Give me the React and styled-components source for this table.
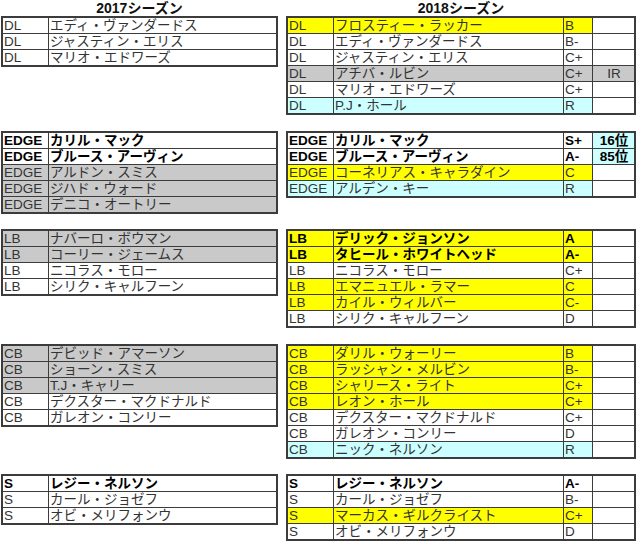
import React from 'react';
import styled, { createGlobalStyle } from 'styled-components';

const YELLOW = '#ffff00';
const GRAY = '#c9c9c9';
const CYAN = '#ccffff';

const GlobalStyle = createGlobalStyle`
	html, body {
		margin: 0;
		padding: 0;
		background: #ffffff;
	}
	body {
		font-family: "Liberation Sans", "Noto Sans CJK JP", sans-serif;
	}
`;

const LEFT_COLS = '45px 1fr';
const RIGHT_COLS = '45px 230px 29px 1fr';

const dl2017 = [
	{ pos: 'DL', name: 'エディ・ヴァンダードス' },
	{ pos: 'DL', name: 'ジャスティン・エリス' },
	{ pos: 'DL', name: 'マリオ・エドワーズ' },
];
const dl2018 = [
	{ pos: 'DL', name: 'フロスティー・ラッカー', grade: 'B', fill: YELLOW },
	{ pos: 'DL', name: 'エディ・ヴァンダードス', grade: 'B-' },
	{ pos: 'DL', name: 'ジャスティン・エリス', grade: 'C+' },
	{ pos: 'DL', name: 'アチバ・ルビン', grade: 'C+', note: 'IR', fill: GRAY, noteFill: GRAY },
	{ pos: 'DL', name: 'マリオ・エドワーズ', grade: 'C+' },
	{ pos: 'DL', name: 'P.J・ホール', grade: 'R', fill: CYAN },
];

const edge2017 = [
	{ pos: 'EDGE', name: 'カリル・マック', bold: true },
	{ pos: 'EDGE', name: 'ブルース・アーヴィン', bold: true },
	{ pos: 'EDGE', name: 'アルドン・スミス', fill: GRAY },
	{ pos: 'EDGE', name: 'ジハド・ウォード', fill: GRAY },
	{ pos: 'EDGE', name: 'デニコ・オートリー', fill: GRAY },
];
const edge2018 = [
	{ pos: 'EDGE', name: 'カリル・マック', grade: 'S+', note: '16位', noteFill: CYAN, bold: true },
	{ pos: 'EDGE', name: 'ブルース・アーヴィン', grade: 'A-', note: '85位', noteFill: CYAN, bold: true },
	{ pos: 'EDGE', name: 'コーネリアス・キャラダイン', grade: 'C', fill: YELLOW },
	{ pos: 'EDGE', name: 'アルデン・キー', grade: 'R', fill: CYAN },
];

const lb2017 = [
	{ pos: 'LB', name: 'ナバーロ・ボウマン', fill: GRAY },
	{ pos: 'LB', name: 'コーリー・ジェームス', fill: GRAY },
	{ pos: 'LB', name: 'ニコラス・モロー' },
	{ pos: 'LB', name: 'シリク・キャルフーン' },
];
const lb2018 = [
	{ pos: 'LB', name: 'デリック・ジョンソン', grade: 'A', fill: YELLOW, bold: true },
	{ pos: 'LB', name: 'タヒール・ホワイトヘッド', grade: 'A-', fill: YELLOW, bold: true },
	{ pos: 'LB', name: 'ニコラス・モロー', grade: 'C+' },
	{ pos: 'LB', name: 'エマニュエル・ラマー', grade: 'C', fill: YELLOW },
	{ pos: 'LB', name: 'カイル・ウィルバー', grade: 'C-', fill: YELLOW },
	{ pos: 'LB', name: 'シリク・キャルフーン', grade: 'D' },
];

const cb2017 = [
	{ pos: 'CB', name: 'デビッド・アマーソン', fill: GRAY },
	{ pos: 'CB', name: 'ショーン・スミス', fill: GRAY },
	{ pos: 'CB', name: 'T.J・キャリー', fill: GRAY },
	{ pos: 'CB', name: 'デクスター・マクドナルド' },
	{ pos: 'CB', name: 'ガレオン・コンリー' },
];
const cb2018 = [
	{ pos: 'CB', name: 'ダリル・ウォーリー', grade: 'B', fill: YELLOW },
	{ pos: 'CB', name: 'ラッシャン・メルビン', grade: 'B-', fill: YELLOW },
	{ pos: 'CB', name: 'シャリース・ライト', grade: 'C+', fill: YELLOW },
	{ pos: 'CB', name: 'レオン・ホール', grade: 'C+', fill: YELLOW },
	{ pos: 'CB', name: 'デクスター・マクドナルド', grade: 'C+' },
	{ pos: 'CB', name: 'ガレオン・コンリー', grade: 'D' },
	{ pos: 'CB', name: 'ニック・ネルソン', grade: 'R', fill: CYAN },
];

const s2017 = [
	{ pos: 'S', name: 'レジー・ネルソン', bold: true },
	{ pos: 'S', name: 'カール・ジョゼフ' },
	{ pos: 'S', name: 'オビ・メリフォンウ' },
];
const s2018 = [
	{ pos: 'S', name: 'レジー・ネルソン', grade: 'A-', bold: true },
	{ pos: 'S', name: 'カール・ジョゼフ', grade: 'B-' },
	{ pos: 'S', name: 'マーカス・ギルクライスト', grade: 'C+', fill: YELLOW },
	{ pos: 'S', name: 'オビ・メリフォンウ', grade: 'D' },
];

const sections = [
	[dl2017, dl2018],
	[edge2017, edge2018],
	[lb2017, lb2018],
	[cb2017, cb2018],
	[s2017, s2018],
];

function Sheet({ rows, wide }) {
	return (
		<Table $width={wide ? 350 : 277}>
			{rows.map((r, i) => (
				<Row key={i} $cols={wide ? RIGHT_COLS : LEFT_COLS} $bold={r.bold}>
					<Cell $fill={r.fill}>{r.pos}</Cell>
					<Cell $fill={r.fill}>{r.name}</Cell>
					{wide && <Cell $fill={r.fill}>{r.grade}</Cell>}
					{wide && (
						<Cell $fill={r.noteFill} $center>
							{r.note}
						</Cell>
					)}
				</Row>
			))}
		</Table>
	);
}

export default function App() {
	return (
		<Page>
			<GlobalStyle />
			<Line>
				<Title $width={277}>2017シーズン</Title>
				<Title $width={350}>2018シーズン</Title>
			</Line>
			<Sections>
				{sections.map(([left, right], i) => (
					<Line key={i}>
						<Sheet rows={left} />
						<Sheet rows={right} wide />
					</Line>
				))}
			</Sections>
		</Page>
	);
}

const Page = styled.div`
	width: 640px;
	height: 551px;
	padding-left: 1px;
	box-sizing: border-box;
	overflow: hidden;
	color: #2b2b2b;
	font-family: "Liberation Sans", "Noto Sans CJK JP", sans-serif;
	font-size: 13.5px;
`;

const Line = styled.div`
	display: flex;
	align-items: flex-start;
	gap: 8px;
`;

const Title = styled.div`
	width: ${(p) => p.$width}px;
	height: 16px;
	line-height: 16px;
	text-align: center;
	font-family: "Liberation Sans", "Noto Sans CJK JP", sans-serif;
	font-weight: bold;
	font-size: 14px;
	color: #111;
`;

const Sections = styled.div`
	display: flex;
	flex-direction: column;
	gap: 15.5px;
`;

const Table = styled.div`
	width: ${(p) => p.$width}px;
	box-sizing: border-box;
	border: 2px solid #3c3c3c;
	background: #fff;
`;

const Row = styled.div`
	display: grid;
	grid-template-columns: ${(p) => p.$cols};
	height: 16px;
	box-sizing: border-box;
	border-top: 1px solid #3c3c3c;
	font-weight: ${(p) => (p.$bold ? 'bold' : 'normal')};
	color: ${(p) => (p.$bold ? '#000' : '#333')};

	&:first-child {
		height: 15px;
		border-top: none;
	}
`;

const Cell = styled.div`
	box-sizing: border-box;
	padding-left: 1px;
	line-height: 15px;
	white-space: nowrap;
	overflow: hidden;
	background: ${(p) => p.$fill || '#fff'};
	text-align: ${(p) => (p.$center ? 'center' : 'left')};

	& + & {
		border-left: 1px solid #3c3c3c;
	}
`;
